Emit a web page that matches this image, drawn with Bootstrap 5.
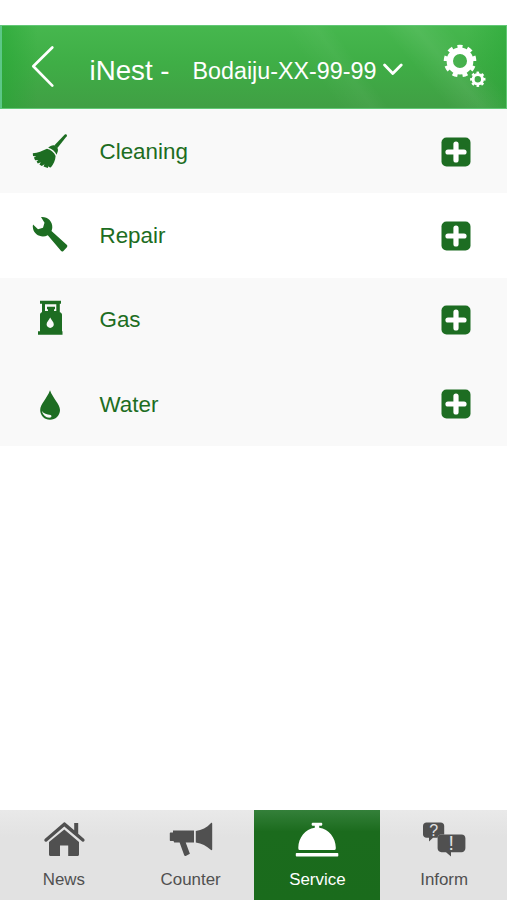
<!DOCTYPE html>
<html lang="en">
<head>
<meta charset="utf-8">
<meta name="viewport" content="width=device-width, initial-scale=1">
<title>iNest</title>
<link href="https://cdn.jsdelivr.net/npm/bootstrap@5.3.0/dist/css/bootstrap.min.css" rel="stylesheet">
<style>
  body { font-family: "Liberation Sans", Arial, sans-serif; padding-top: 25px; }
  svg { display: block; flex: none; }
  .app-bar {
    height: 84px; padding: 0 19px 0 29px;
    border: 1px solid #62c876; border-left: 2px solid #5cc787;
    background:
      linear-gradient(50deg, transparent 78%, rgba(255,255,255,.07) 84%, transparent 90%),
      linear-gradient(55deg, transparent 60%, rgba(255,255,255,.04) 66%, transparent 69%),
      linear-gradient(90deg, rgba(35,165,50,.55), transparent 7%, transparent 92%, rgba(35,165,50,.45)),
      linear-gradient(#46b74e, #3fae46 45%, #409f44);
  }
  .app-title { font-size: 27.7px; line-height: 32px; margin-left: 34.5px; padding-top: 7px; }
  .unit { font-size: 23.3px; line-height: 32px; margin-left: 23px; padding-top: 7px; }
  .unit-caret { margin-left: 7px; }
  .service-row {
    height: 84.25px; padding: 1px 36px 0 30px;
    background: #f9f9f9; color: #1d6d22; font-size: 22.4px;
  }
  .service-row.plain { background: #fff; }
  .service-row .label { margin-left: 29.5px; }
  .tab-bar { height: 90px; background: linear-gradient(#e9e9e9, #e2e2e2 30%, #e2e2e2); }
  .tab-bar .nav-link { color: #505050; font-size: 16.9px; line-height: 20px; padding: 9px 0 0 1px; height: 90px; }
  .tab-bar .nav-link.active { color: #fff; background: linear-gradient(#34803a, #1b6b1d 24%, #1a6b1c); }
  .tab-bar svg { margin: 0 auto 11px; }
</style>
</head>
<body class="bg-white vh-100 d-flex flex-column overflow-hidden">

<svg width="0" height="0" class="position-absolute" aria-hidden="true">
  <symbol id="plus" viewBox="0 0 30 30">
    <rect x=".5" y=".5" width="29" height="29" rx="5" fill="#1d6d22"/>
    <path d="M15 7v16M7 15h16" stroke="#fff" stroke-width="5.200" stroke-linecap="round"/>
  </symbol>
</svg>

<header class="app-bar d-flex align-items-center text-white flex-shrink-0">
  <svg width="24" height="44" viewBox="0 0 24 44" fill="none" stroke="#fff" stroke-width="2.700" stroke-linecap="round" stroke-linejoin="round"><path d="M21.300 2.500 2.300 21.300 21.300 40.600"/></svg>
  <div class="app-title text-nowrap">iNest -</div>
  <div class="unit text-nowrap">Bodaiju-XX-99-99</div>
  <svg class="unit-caret mt-1" width="20" height="14" viewBox="0 0 20 14" fill="none" stroke="#fff" stroke-width="2.800" stroke-linecap="round" stroke-linejoin="round"><path d="M1.600 3 9.800 11.500 18.200 3"/></svg>
  <svg class="ms-auto" width="44" height="46" viewBox="0 0 44 46" fill="none" stroke="#fff">
    <circle cx="17" cy="17" r="10.200" stroke-width="6.400"/>
    <circle cx="17" cy="17" r="14.200" stroke-width="4.200" pathLength="90" stroke-dasharray="5 5" transform="rotate(-100 17 17)"/>
    <circle cx="34.800" cy="35.300" r="4.700" stroke-width="3"/>
    <circle cx="34.800" cy="35.300" r="6.400" stroke-width="2.600" pathLength="80" stroke-dasharray="5 5" transform="rotate(-101 34.8 35.3)"/>
  </svg>
</header>

<main class="flex-grow-1">
  <div class="service-row d-flex align-items-center">
    <svg width="40" height="40" viewBox="0 0 40 40" fill="#1d6d22">
      <path d="M34.800 2.600c1.400-1.100 2.800.2 1.900 1.700L27.400 16l-2.900-2.700z"/>
      <path d="M18.200 15.700c2-1.800 4.800-3.300 7-2 2 1.200 3.200 3 2.700 5.300l-1.300 3.700c-1.800-3.500-4.600-5.900-8.400-7z"/>
      <path d="M17 16.700c4 .9 7.200 3.700 8.600 7.400-.2 4.600-2.200 8.300-4.800 11.300l-2-.5-.2-1.200-.8 2.200-4.300-1.300 1-2.400-2.700 1.900-2.400-1.600 1.400-2.300-3 1.300-1.200-1.900 1.700-1.600-3.200.3-1.200-2.800 2.300-1.100-3.200-.5-.2-2.600c5.200-.5 9.500-2.400 14.200-4.600z"/>
    </svg>
    <span class="label">Cleaning</span>
    <svg class="ms-auto" width="30" height="30"><use href="#plus"/></svg>
  </div>
  <div class="service-row plain d-flex align-items-center">
    <svg width="40" height="40" viewBox="0 0 40 40" fill="#1d6d22">
      <path d="M11 1c6.500-.6 11.700 4.300 11.300 10.500-.1 1.400-.3 2.400-.8 3.500l15.200 13.800c.8.800.8 1.700.2 2.400l-3.500 3.700c-.9.800-1.700.8-2.500-.1L17.800 19.200C11.700 22.300 4.200 19 3 12.500c-.3-1.400-.3-2.800 0-4l5 4.700 5-1.500 1.500-4.900z"/>
    </svg>
    <span class="label">Repair</span>
    <svg class="ms-auto" width="30" height="30"><use href="#plus"/></svg>
  </div>
  <div class="service-row d-flex align-items-center">
    <svg width="40" height="40" viewBox="0 0 40 40" fill="#1d6d22">
      <path fill-rule="evenodd" d="M10 .8h21v3h-1.200v8.500c1.300.3 2.200 1.200 2.200 2.500v16.500h.5v3.500H8v-3.500h2V14.800c0-1.300.8-2.200 2-2.500V3.800h-2zM15 4.200V11h3V9.200h-1V6.800h8v2.400h-1V11h2.300V4.200zM20.200 17.500c-1.100 2.600-3.600 4.300-3.600 6.800 0 2.100 1.600 3.600 3.600 3.600s3.600-1.500 3.600-3.600c0-2.500-2.500-4.200-3.600-6.800z"/>
    </svg>
    <span class="label">Gas</span>
    <svg class="ms-auto" width="30" height="30"><use href="#plus"/></svg>
  </div>
  <div class="service-row d-flex align-items-center">
    <svg width="40" height="40" viewBox="0 0 40 40">
      <path fill="#1d6d22" d="M20 6.300c-2.800 8-9.800 13.800-9.800 19.700 0 5.500 4.300 9.800 9.800 9.800s10-4.300 10-9.800c0-5.900-7.200-11.700-10-19.700z"/>
      <path fill="#f9f9f9" d="M12 27c1.600 2.600 4.700 3.700 8.600 3.900 1.200.4 1.200 2.400-.4 2.700-4.200.4-7.400-2.500-8.200-6.600z"/>
    </svg>
    <span class="label">Water</span>
    <svg class="ms-auto" width="30" height="30"><use href="#plus"/></svg>
  </div>
</main>

<nav class="tab-bar nav nav-justified flex-nowrap flex-shrink-0">
  <a class="nav-link" href="#">
    <svg width="44" height="40" viewBox="0 0 44 40" fill="#505050">
      <path d="M21.800 3.500c.7-.3 1.300-.1 1.900.4l8.500 7.400V4h4v10.800l6 5.200c1.200 1.500-.3 3.500-2 2.500L22.300 7.600 4.800 22.500c-1.800 1-3.300-1-2.100-2.500z"/>
      <path d="M22.300 10.500 37 23v12.500c0 .9-.6 1.500-1.500 1.500h-9.300V26.500H18V37H8.500c-.9 0-1.500-.6-1.500-1.500V23z"/>
    </svg>
    News
  </a>
  <a class="nav-link" href="#">
    <svg width="44" height="40" viewBox="0 0 44 40" fill="#505050">
      <path d="M4 11.500h21v12h-8.300l4.200 11.300-4.200 2.200c-.8.200-1.300-.2-1.600-.9l-4.500-12.600H5.200L4.500 22H1.800c-.7 0-1-.4-1-1v-6.500c0-.7.3-1 1-1H4z"/>
      <path d="M26.800 12c6-1 11-3.500 15-7.800.8-.8 1.400-.6 1.400.5v25.600c0 1.100-.7 1.300-1.500.5-4-3.800-9-6.300-14.900-7.300z"/>
    </svg>
    Counter
  </a>
  <a class="nav-link active" href="#">
    <svg width="44" height="40" viewBox="0 0 44 40" fill="#fff">
      <path d="M17.500 3.700h9c1.100 0 1.100 3 0 3h-2.300v2C34 9.800 40.600 19 40.800 28.500c0 1.800-.3 2.500-1.300 2.500h-35c-1 0-1.200-.8-1.200-2.500C3.500 19 10 9.800 19.800 8.700v-2h-2.300c-1.100 0-1.100-3 0-3z"/>
      <rect x=".8" y="34" width="42.500" height="3.400" rx=".7"/>
    </svg>
    Service
  </a>
  <a class="nav-link" href="#">
    <svg width="44" height="40" viewBox="0 0 44 40" fill="#505050">
      <path d="M4.500 3.500h14.200c2 0 3.500 1.400 3.500 3.400v8.500h-3c-2.200 0-3.500 1.300-3.500 3.400H11l-4 3.700v-3.700H4.500c-2 0-3.500-1.400-3.500-3.300V6.900c0-2 1.500-3.400 3.500-3.400z"/>
      <path d="M19.500 15.600h20c2.400 0 3.900 1.500 3.900 3.700v10c0 2.400-1.600 3.900-3.900 3.900h-10.500v4.300l-5-4.300h-4.500c-2.400 0-3.900-1.600-3.900-3.900v-10c0-2.200 1.500-3.700 3.900-3.700z"/>
      <text x="11.700" y="16.800" font-size="16" text-anchor="middle" fill="#e2e2e2">?</text>
      <text x="29.300" y="31.300" font-size="19.500" text-anchor="middle" fill="#e2e2e2">!</text>
    </svg>
    Inform
  </a>
</nav>

<script src="https://cdn.jsdelivr.net/npm/bootstrap@5.3.0/dist/js/bootstrap.bundle.min.js"></script>
</body>
</html>
